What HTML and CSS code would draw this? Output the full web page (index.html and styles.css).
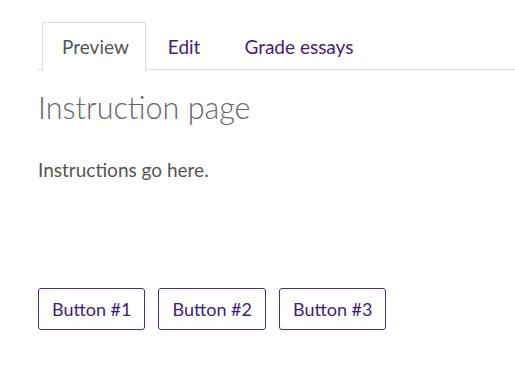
FILE: index.html
```html
<!DOCTYPE html>
<html>
<head>
<meta charset="utf-8">
<link rel="stylesheet" href="styles.css">
</head>
<body>
<div class="page">
  <nav class="tabs">
    <a class="tab active">Preview</a>
    <a class="tab">Edit</a>
    <a class="tab">Grade essays</a>
  </nav>
  <h1 class="title">Instruction page</h1>
  <p class="text">Instructions go here.</p>
  <div class="buttons">
    <button class="btn">Button #1</button>
    <button class="btn">Button #2</button>
    <button class="btn">Button #3</button>
  </div>
</div>
</body>
</html>
```
FILE: styles.css
```css
html, body { margin: 0; padding: 0; background: #fff; }
body { font-family: "Lato", "Liberation Sans", sans-serif; color: #555; }
.page { padding: 22px 0 0 38px; }
.tabs {
  display: flex;
  border-bottom: 1px solid #ddd;
  padding-left: 4px;
  height: 48px;
  box-sizing: border-box;
}
.tab {
  font-size: 19px;
  padding: 0 21px;
  line-height: 48px;
  height: 48px;
  box-sizing: border-box;
  color: #3f1d7a;
  border: 1px solid transparent;
  border-bottom: none;
}
.tab.active {
  color: #555;
  border-color: #ddd;
  background: #fff;
  height: 49px;
  padding: 0 16px 0 19px;
}
.title {
  font-weight: 300;
  font-size: 30.5px;
  margin: 18px 0 0;
  color: #666;
  line-height: 38px;
}
.text { font-size: 19px; margin: 32px 0 0; line-height: 24px; }
.buttons { display: flex; gap: 13px; margin-top: 106px; }
.btn {
  font-family: inherit;
  font-size: 18px;
  color: #3f1d7a;
  background: #fff;
  border: 1px solid #4b2a8a;
  border-radius: 3px;
  height: 42px;
  padding: 0 13px;
}
```
